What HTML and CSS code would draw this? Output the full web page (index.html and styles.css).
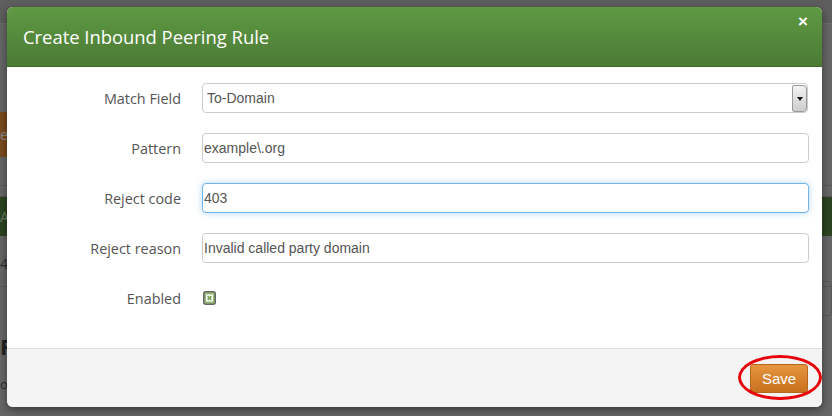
FILE: index.html
```html
<!DOCTYPE html>
<html lang="en">
<head>
  <meta charset="UTF-8">
  <title>Create Inbound Peering Rule</title>
  <link rel="stylesheet" href="styles.css">
</head>
<body>
<div class="page">
  <div class="topbar"></div>
  <div class="toolbar">
    <span class="bg-btn">e</span>
  </div>
  <div class="bg-row"></div>
  <div class="bg-row short"></div>
  <div class="bg-green">Ac</div>
  <div class="bg-row tall"><span class="bg-num">4</span><span class="bg-box"></span></div>
  <h3 class="bg-title">R</h3>
  <p class="bg-text">o</p>
</div>

<div class="modal">
  <div class="modal-header">
    <h3>Create Inbound Peering Rule</h3>
    <span class="close">&times;</span>
  </div>
  <div class="modal-body">
    <form class="form-grid">
      <label for="field">Match Field</label>
      <div class="select-wrap">
        <select id="field">
          <option>To-Domain</option>
          <option>From-Domain</option>
        </select>
        <span class="select-arrow"></span>
      </div>

      <label for="pattern">Pattern</label>
      <input type="text" id="pattern" value="example\.org">

      <label for="code">Reject code</label>
      <input type="text" id="code" class="focused" value="403">

      <label for="reason">Reject reason</label>
      <input type="text" id="reason" value="Invalid called party domain">

      <label>Enabled</label>
      <div class="check-cell">
        <svg class="check" width="13" height="14" viewBox="0 0 13 14">
          <rect x="0.75" y="0.75" width="11.5" height="12.5" rx="2" fill="#95ba72" stroke="#666" stroke-width="1.5"/>
          <rect x="3" y="3.5" width="7" height="7" fill="#fff"/>
          <path d="M4.6 5.1 L8.4 8.9 M8.4 5.1 L4.6 8.9" stroke="#7aa457" stroke-width="1.6"/>
        </svg>
      </div>
    </form>
  </div>
  <div class="modal-footer">
    <span class="mark">
      <button class="btn-save">Save</button>
    </span>
  </div>
</div>
</body>
</html>
```

FILE: styles.css
```css
html, body {
  margin: 0;
  height: 100%;
}
body {
  background-color: #666;
  font-family: "Open Sans", "Liberation Sans", sans-serif;
  overflow: hidden;
}

/* dimmed page behind the dialog */
.page {
  color: #2a2a2a;
}
.topbar {
  height: 23px;
  background-color: #5e5e5e;
  border-bottom: 1px solid #6e6e6e;
}
.toolbar {
  height: 45px;
  margin-top: 88px;
}
.bg-btn {
  display: block;
  width: 8px;
  height: 45px;
  background-color: #7a4b1f;
  color: #8c8c8c;
  font-size: 14px;
  line-height: 45px;
}
.bg-row {
  height: 28px;
  border-bottom: 1px solid #595959;
}
.bg-row.short {
  height: 10px;
}
.bg-green {
  height: 39px;
  background-color: #2c4420;
  color: #6d7d62;
  font-size: 14px;
  line-height: 39px;
}
.bg-row.tall {
  height: 50px;
  display: flex;
  justify-content: space-between;
  align-items: flex-start;
}
.bg-num {
  margin-top: 18px;
  font-size: 14px;
}
.bg-box {
  width: 20px;
  height: 33px;
  margin-top: 45px;
  border: 1px solid #595959;
  border-radius: 3px;
}
.bg-title {
  margin: 44px 0 0 0;
  font-size: 22px;
  font-weight: bold;
  color: #222;
}
.bg-text {
  margin: 14px 0 0 0;
  font-size: 13px;
}

/* dialog */
.modal {
  position: absolute;
  top: 7px;
  left: 7px;
  width: 815px;
  background-color: #fff;
  border-radius: 6px;
  box-shadow: 0 3px 9px rgba(0,0,0,0.45);
  overflow: hidden;
}
.modal-header {
  height: 60px;
  display: flex;
  align-items: center;
  justify-content: space-between;
  padding: 0 16px;
  background: linear-gradient(to bottom, #5f9a43, #4b7a35);
  border-bottom: 1px solid #3f6a2c;
  box-sizing: border-box;
}
.modal-header h3 {
  margin: 0;
  padding-bottom: 1px;
  color: #fff;
  font-size: 18.4px;
  font-weight: 400;
}
.close {
  align-self: flex-start;
  margin-top: 5px;
  margin-right: -2px;
  color: #fff;
  font-family: "Liberation Sans", sans-serif;
  font-size: 17px;
  font-weight: bold;
}
.modal-body {
  padding: 16px 13px 35px 14px;
}
.form-grid {
  display: grid;
  grid-template-columns: 160px 1fr;
  column-gap: 21px;
  row-gap: 20px;
  align-items: center;
  margin: 0;
}
.form-grid label {
  text-align: right;
  font-size: 14.4px;
  color: #555;
}
input[type=text], select {
  width: 100%;
  height: 30px;
  box-sizing: border-box;
  border: 1px solid #ccc;
  border-radius: 4px;
  background-color: #fff;
  font-family: "Liberation Sans", Arial, sans-serif;
  font-size: 14px;
  color: #555;
  padding: 0 0 0 1px;
  margin: 0;
  outline: none;
}
input.focused {
  border-color: #72b4ea;
  box-shadow: 0 0 6px rgba(102,175,233,0.5);
}
.select-wrap {
  position: relative;
}
select {
  -webkit-appearance: none;
  appearance: none;
  padding-left: 4px;
  width: 606px;
}
.select-arrow {
  position: absolute;
  top: 2px;
  right: 2px;
  width: 13px;
  height: 25px;
  background: linear-gradient(to bottom, #f2f2f2, #cdcdcd);
  border: 1px solid #9a9a9a;
  border-radius: 2px 4px 4px 2px;
}
.select-arrow::after {
  content: "";
  position: absolute;
  left: 4px;
  top: 11px;
  border-left: 3px solid transparent;
  border-right: 3px solid transparent;
  border-top: 4px solid #111;
}
.check-cell {
  height: 30px;
  display: flex;
  align-items: center;
}
.check {
  display: block;
  margin-left: 1px;
}
.modal-footer {
  height: 59px;
  background-color: #f4f4f4;
  border-top: 1px solid #ddd;
  box-sizing: border-box;
  display: flex;
  justify-content: flex-end;
  align-items: center;
  padding-right: 14px;
}
.mark {
  position: relative;
  display: block;
}
.mark::before {
  content: "";
  position: absolute;
  left: -12px;
  right: -14px;
  top: -9px;
  bottom: -7px;
  border: 3px solid #e8000b;
  border-radius: 50%;
}
.btn-save {
  display: block;
  width: 58px;
  height: 29px;
  padding: 0;
  border: 1px solid #b8661c;
  border-radius: 3px;
  background: linear-gradient(to bottom, #e7953f, #c8711e);
  color: #fff;
  font-family: "Liberation Sans", Arial, sans-serif;
  font-size: 15px;
}
```
